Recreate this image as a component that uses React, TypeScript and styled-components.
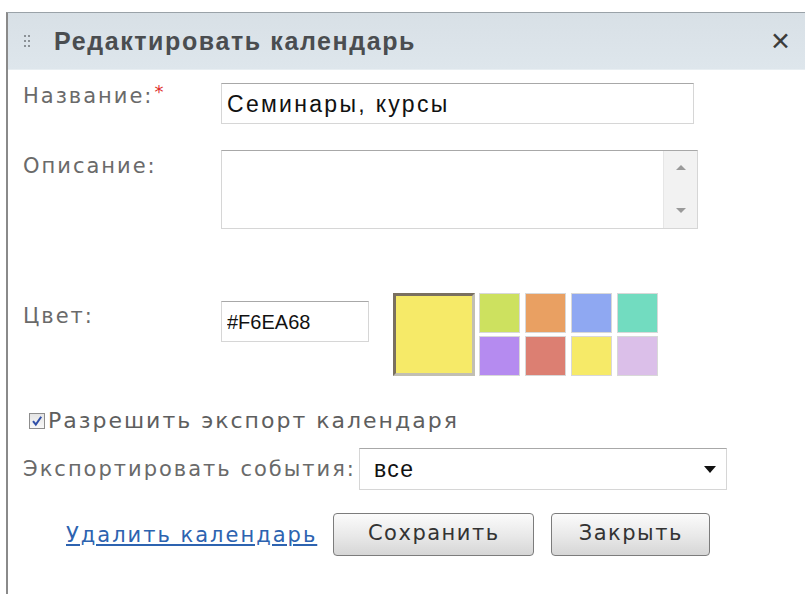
import React from "react";
import styled, { createGlobalStyle } from "styled-components";

const GlobalStyle = createGlobalStyle`
  html, body {
    margin: 0;
    padding: 0;
    background: #ffffff;
  }
`;

const Dialog = styled.div`
  margin: 12px 0 0 6px;
  min-height: 582px;
  border-left: 2px solid #8a8a8a;
  border-top: 1px solid #9aa2a8;
  background: #ffffff;
  display: flex;
  flex-direction: column;
  box-sizing: border-box;
`;

const Header = styled.div`
  height: 56px;
  display: flex;
  align-items: center;
  padding: 0 14px 0 16px;
  background: linear-gradient(#d8e0e6, #dee6ec);
  border-bottom: 1px solid #e8eef2;
`;

const Grip = styled.span`
  display: grid;
  grid-template-columns: repeat(2, 2px);
  gap: 3px 2px;
  margin-right: 24px;
  span {
    width: 2px;
    height: 2px;
    background: #8b9196;
  }
`;

const Title = styled.div`
  flex: 1;
  font-family: "Liberation Sans", Arial, sans-serif;
  font-weight: 700;
  font-size: 25px;
  letter-spacing: 1.6px;
  color: #4a4d50;
`;

const CloseButton = styled.button`
  border: none;
  background: none;
  padding: 0;
  font-family: "DejaVu Sans", sans-serif;
  font-weight: 700;
  font-size: 25px;
  color: #3c3c3c;
  cursor: pointer;
`;

const Body = styled.div`
  padding: 13px 0 0 15px;
  display: flex;
  flex-direction: column;
  font-family: "DejaVu Sans", Verdana, sans-serif;
  font-size: 21px;
  letter-spacing: 2px;
  color: #6a6a6a;
`;

const Row = styled.div<{ $top?: number }>`
  display: flex;
  align-items: flex-start;
  margin-top: ${(p) => p.$top ?? 0}px;
`;

const Label = styled.label<{ $shift?: number }>`
  width: 198px;
  flex: none;
  margin-top: ${(p) => p.$shift ?? 0}px;
`;

const Required = styled.span`
  color: #e0302c;
  font-size: 18px;
  vertical-align: 5px;
  margin-left: 1px;
`;

const TextInput = styled.input<{ $width: number; $spacing?: number }>`
  width: ${(p) => p.$width}px;
  height: 41px;
  box-sizing: border-box;
  border: 1px solid #d6d6d6;
  border-top-color: #a8a8a8;
  padding: 2px 5px 0;
  font-family: "Liberation Sans", Arial, sans-serif;
  font-size: ${(p) => (p.$spacing ? 23 : 20)}px;
  letter-spacing: ${(p) => p.$spacing ?? 0}px;
  color: #111;
  outline: none;
`;

const TextAreaBox = styled.div`
  width: 477px;
  height: 79px;
  box-sizing: border-box;
  border: 1px solid #d6d6d6;
  border-top-color: #a8a8a8;
  display: flex;
`;

const TextArea = styled.textarea`
  flex: 1;
  border: none;
  resize: none;
  outline: none;
  overflow: hidden;
`;

const ScrollTrack = styled.div`
  width: 33px;
  background: #f2f2f2;
  border-left: 1px solid #e6e6e6;
  display: flex;
  flex-direction: column;
  justify-content: space-between;
  align-items: center;
  padding: 14px 0 15px;
`;

const Arrow = styled.span<{ $up?: boolean }>`
  width: 0;
  height: 0;
  border-left: 5px solid transparent;
  border-right: 5px solid transparent;
  ${(p) =>
    p.$up
      ? "border-bottom: 5px solid #9a9a9a;"
      : "border-top: 5px solid #9a9a9a;"}
`;

const Palette = styled.div`
  display: flex;
  gap: 4px;
  margin-left: 24px;
  margin-top: -8px;
`;

const CurrentSwatch = styled.div<{ $color: string }>`
  width: 82px;
  height: 83px;
  box-sizing: border-box;
  background: ${(p) => p.$color};
  border: 3px solid #c2bfb2;
  border-top-color: #7a7060;
  border-left-color: #7a7060;
`;

const SwatchGrid = styled.div`
  display: grid;
  grid-template-columns: repeat(4, 41px);
  grid-template-rows: repeat(2, 40px);
  column-gap: 5px;
  row-gap: 3px;
`;

const Swatch = styled.div<{ $color: string }>`
  background: ${(p) => p.$color};
  border: 1px solid #d8d8d8;
  box-sizing: border-box;
  cursor: pointer;
`;

const CheckRow = styled.label`
  display: flex;
  align-items: center;
  margin: 32px 0 0 6px;
  gap: 3px;
  font-size: 22px;
  color: #5e5e5e;
`;

const CheckBox = styled.span`
  width: 14px;
  height: 14px;
  border: 1px solid #8d8d8d;
  background: linear-gradient(#e4e4e4, #f8f8f8);
  display: flex;
  align-items: center;
  justify-content: center;
`;

const InlineRow = styled.div`
  display: flex;
  align-items: center;
  margin-top: 15px;
  gap: 3px;
`;

const Select = styled.div`
  width: 368px;
  height: 42px;
  box-sizing: border-box;
  border: 1px solid #d6d6d6;
  border-top-color: #a8a8a8;
  display: flex;
  align-items: center;
  justify-content: space-between;
  padding: 0 10px 0 14px;
  font-family: "Liberation Sans", Arial, sans-serif;
  font-size: 23px;
  letter-spacing: 1.4px;
  color: #111;
`;

const SelectArrow = styled.span`
  border-left: 6px solid transparent;
  border-right: 6px solid transparent;
  border-top: 7px solid #111;
`;

const Actions = styled.div`
  display: flex;
  align-items: center;
  margin: 23px 0 0 43px;
`;

const DeleteLink = styled.a`
  color: #2d63b0;
  text-decoration: underline;
  margin-right: 16px;
  cursor: pointer;
`;

const Button = styled.button<{ $width: number }>`
  width: ${(p) => p.$width}px;
  height: 43px;
  margin-right: 17px;
  border: 1px solid #7c7c7c;
  border-radius: 4px;
  background: linear-gradient(#fbfbfb, #e8e8e8 55%, #d6d6d6);
  font-family: "DejaVu Sans", Verdana, sans-serif;
  font-size: 21px;
  letter-spacing: 1.5px;
  color: #333;
  padding: 0 0 3px;
`;

const topColors = ["#cde15f", "#e9a062", "#8fa8f2", "#72dcc0"];
const bottomColors = ["#b58bf0", "#dc7f72", "#f6ea68", "#dbbfe9"];

export default function App() {
  return (
    <>
      <GlobalStyle />
      <Dialog>
        <Header>
          <Grip>
            {Array.from({ length: 6 }).map((_, i) => (
              <span key={i} />
            ))}
          </Grip>
          <Title>Редактировать календарь</Title>
          <CloseButton>✕</CloseButton>
        </Header>
        <Body>
          <Row>
            <Label $shift={-2}>
              Название:<Required>*</Required>
            </Label>
            <TextInput $width={473} $spacing={2.3} defaultValue="Семинары, курсы" />
          </Row>
          <Row $top={26}>
            <Label $shift={4}>Описание:</Label>
            <TextAreaBox>
              <TextArea />
              <ScrollTrack>
                <Arrow $up />
                <Arrow />
              </ScrollTrack>
            </TextAreaBox>
          </Row>
          <Row $top={72}>
            <Label $shift={3}>Цвет:</Label>
            <TextInput $width={148} defaultValue="#F6EA68" />
            <Palette>
              <CurrentSwatch $color="#f6ea68" />
              <SwatchGrid>
                {topColors.concat(bottomColors).map((c, i) => (
                  <Swatch key={i} $color={c} />
                ))}
              </SwatchGrid>
            </Palette>
          </Row>
          <CheckRow>
            <CheckBox>
              <svg width="12" height="12" viewBox="0 0 12 12">
                <path
                  d="M2 6.2 L4.8 9.5 L10.2 1.8"
                  fill="none"
                  stroke="#2f4fa8"
                  strokeWidth="2"
                />
              </svg>
            </CheckBox>
            Разрешить экспорт календаря
          </CheckRow>
          <InlineRow>
            <span>Экспортировать события:</span>
            <Select>
              все
              <SelectArrow />
            </Select>
          </InlineRow>
          <Actions>
            <DeleteLink>Удалить календарь</DeleteLink>
            <Button $width={201}>Сохранить</Button>
            <Button $width={159}>Закрыть</Button>
          </Actions>
        </Body>
      </Dialog>
    </>
  );
}
